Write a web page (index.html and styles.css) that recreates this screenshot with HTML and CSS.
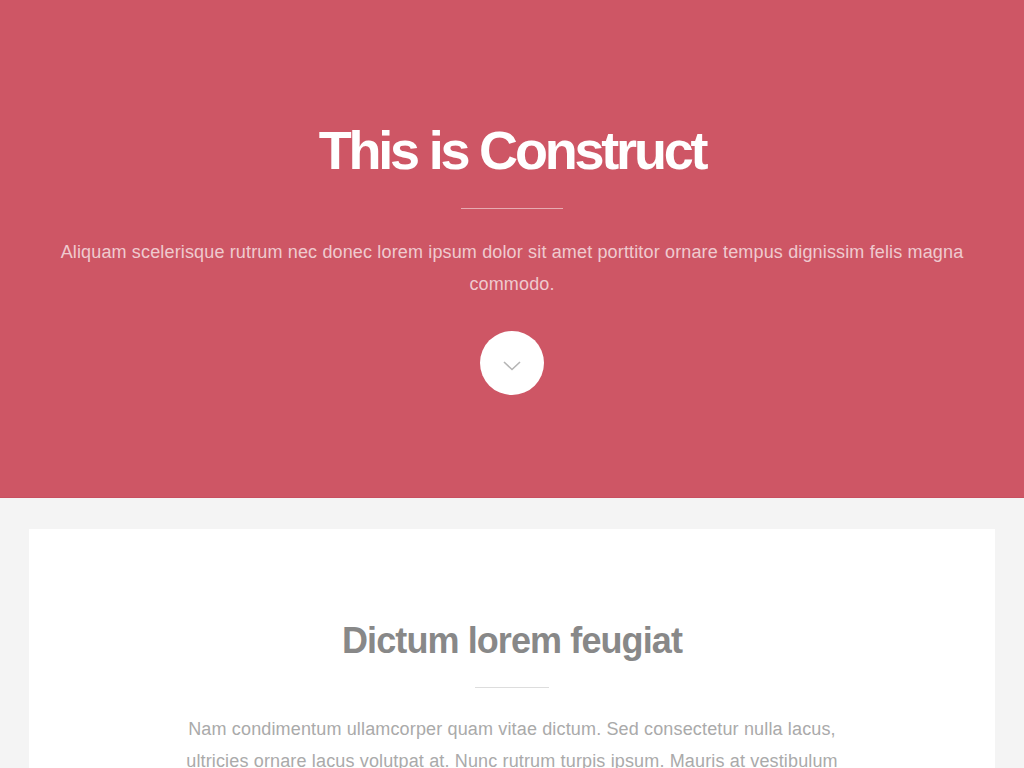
FILE: index.html
```html
<!DOCTYPE html>
<html lang="en">
<head>
<meta charset="utf-8">
<title>Construct</title>
<link rel="stylesheet" href="styles.css">
</head>
<body>
<header class="hero">
  <h1 class="hero-title">This is Construct</h1>
  <hr class="hero-rule">
  <p class="hero-text">Aliquam scelerisque rutrum nec donec lorem ipsum dolor sit amet porttitor ornare tempus dignissim felis magna commodo.</p>
  <a class="hero-button" href="#main" aria-label="Scroll down">
    <svg width="18" height="10" viewBox="0 0 18 10"><path d="M1 1 L9 8.5 L17 1" fill="none" stroke="#b5b5b5" stroke-width="1.6"/></svg>
  </a>
</header>
<main class="wrapper" id="main">
  <section class="card">
    <h2 class="card-title">Dictum lorem feugiat</h2>
    <hr class="card-rule">
    <p class="card-text">Nam condimentum ullamcorper quam vitae dictum. Sed consectetur nulla lacus, ultricies ornare lacus volutpat at. Nunc rutrum turpis ipsum. Mauris at vestibulum nulla, sit amet cursus nisl. Donec tempus dictum lorem.</p>
  </section>
</main>
</body>
</html>
```
FILE: styles.css
```css
html, body {
  margin: 0;
  padding: 0;
}
body {
  background: #f4f4f4;
  font-family: "Liberation Sans", Arial, sans-serif;
}
.hero {
  background: #ce5665;
  height: 498px;
  box-sizing: border-box;
  border-bottom: 1px solid #c85060;
  padding-top: 118px;
  text-align: center;
  display: flex;
  flex-direction: column;
  align-items: center;
}
.hero-title {
  margin: 0;
  color: #fff;
  font-size: 54px;
  line-height: 64px;
  font-weight: bold;
  letter-spacing: -3.2px;
}
.hero-rule {
  width: 102px;
  height: 0;
  border: 0;
  border-top: 1px solid rgba(255,255,255,0.5);
  margin: 26px 0 0;
}
.hero-text {
  margin: 27px 0 0;
  padding: 0 40px;
  color: rgba(255,255,255,0.7);
  font-size: 18px;
  line-height: 32px;
  letter-spacing: 0.15px;
}
.hero-button {
  margin-top: 31px;
  width: 64px;
  height: 64px;
  border-radius: 50%;
  background: #fff;
  display: flex;
  align-items: center;
  justify-content: center;
  padding-top: 5px;
  box-sizing: border-box;
}
.wrapper {
  padding: 31px 29px 0;
}
.card {
  background: #fff;
  padding: 90px 40px 40px;
  text-align: center;
  display: flex;
  flex-direction: column;
  align-items: center;
}
.card-title {
  margin: 0;
  color: #888;
  font-size: 36px;
  line-height: 44px;
  font-weight: bold;
  letter-spacing: -0.9px;
}
.card-rule {
  width: 74px;
  height: 0;
  border: 0;
  border-top: 1px solid #ddd;
  margin: 24px 0 0;
}
.card-text {
  margin: 25px 0 0;
  max-width: 672px;
  color: #aaa;
  font-size: 18px;
  line-height: 32px;
  letter-spacing: 0.15px;
}
```
